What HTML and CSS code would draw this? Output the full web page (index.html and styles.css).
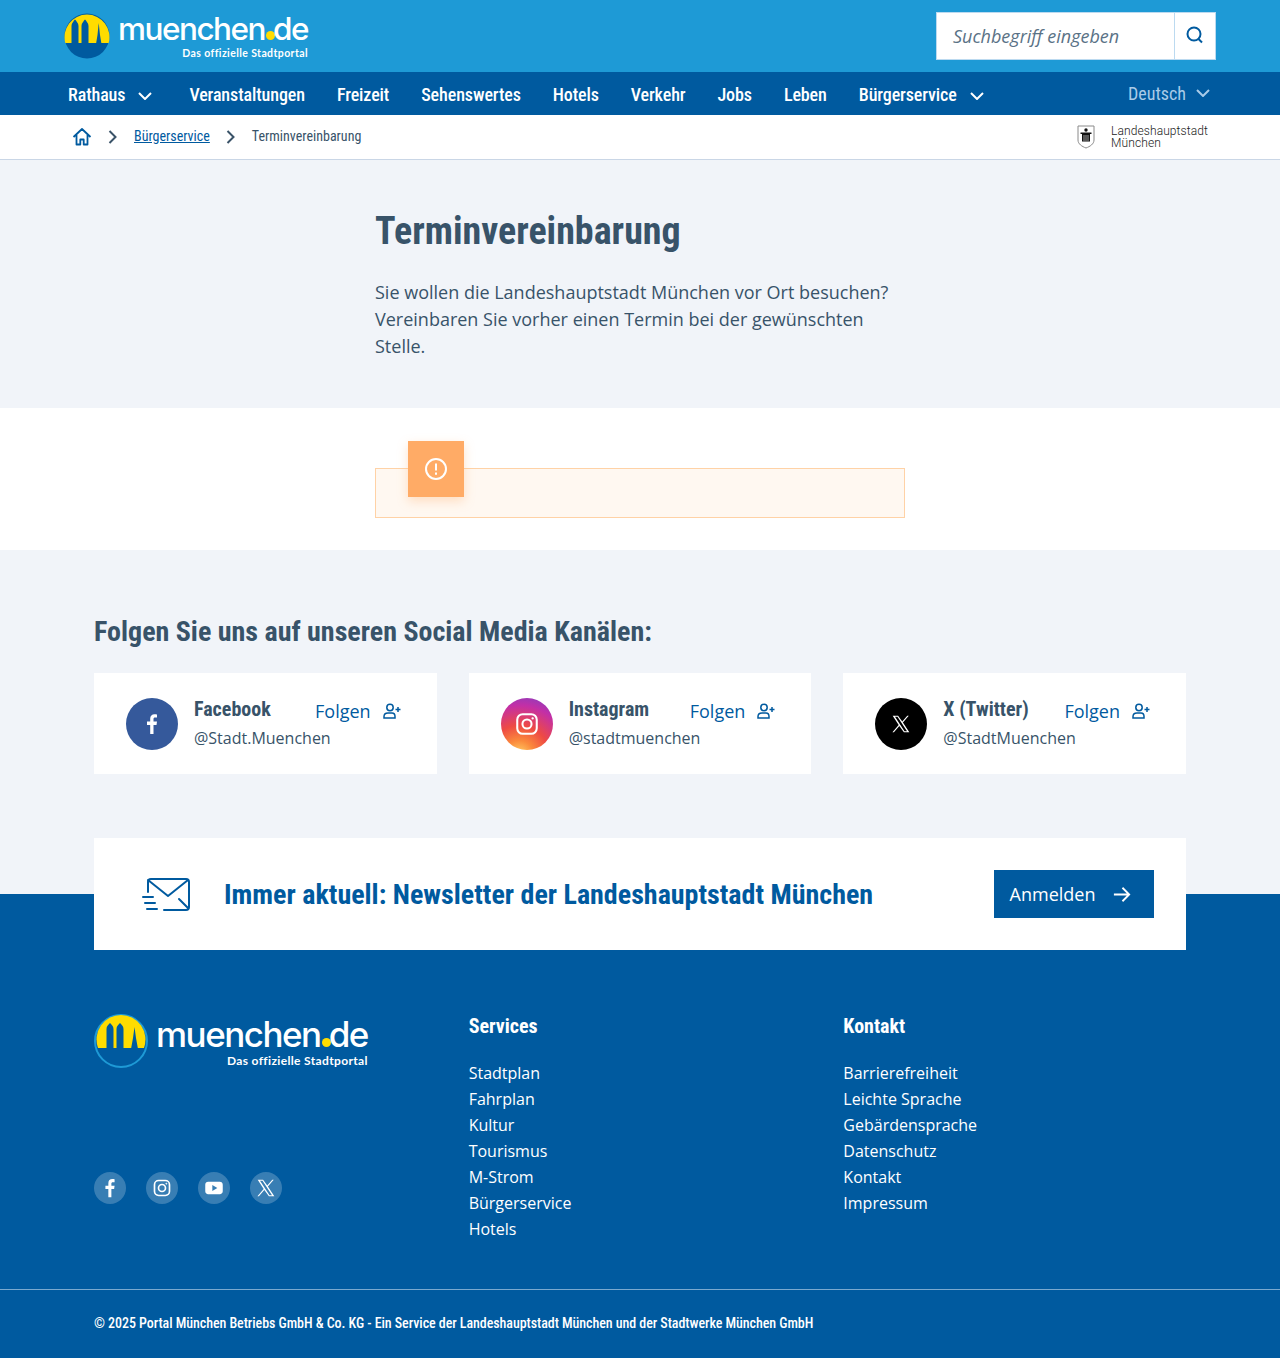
FILE: index.html
```html
<!DOCTYPE html>
<html lang="de">

<head>
  <meta charset="UTF-8">
  <title>Terminvereinbarung</title>
  <link rel="stylesheet" href="styles.css">
</head>

<body>
  <header class="topbar">
    <a class="logo" href="#">
      <svg class="logo-mark" viewBox="0 0 46 46">
        <circle cx="23" cy="23" r="22.500" fill="#005a9f" />
        <path d="M1.300 30A22.500 22.500 0 1 1 44.700 30Z" fill="#ffdc00" />
        <path d="M7.500 31V13C7.500 10 9.500 9 10 7.500L11 6.500 12 7.500C12.500 9 14.500 10 14.500 13V31ZM17.500 31V13C17.500 10 19.500 9 20 7.500L21 6.500 22 7.500C22.500 9 24.500 10 24.500 13V31ZM32 31L33.500 22 34.700 10 36 22 37.500 31Z" fill="#005a9f" />
      </svg>
      <span class="logo-text">
        <span class="logo-name">muenchen<i class="logo-dot"></i>de</span>
        <span class="logo-claim">Das offizielle Stadtportal</span>
      </span>
    </a>
    <form class="search">
      <span class="search-field">Suchbegriff eingeben</span>
      <button class="search-btn" type="button">
        <svg viewBox="0 0 20 20" width="20" height="20" fill="none" stroke="#005a9f" stroke-width="2">
          <circle cx="9" cy="9" r="6.500" />
          <path d="M13.500 14l3.500 3.500" />
        </svg>
      </button>
    </form>
  </header>

  <nav class="mainnav">
    <a class="has-sub" href="#">Rathaus<svg class="chev" viewBox="0 0 14 8"><path d="M1 1l6 6 6-6" /></svg></a>
    <a href="#">Veranstaltungen</a>
    <a href="#">Freizeit</a>
    <a href="#">Sehenswertes</a>
    <a href="#">Hotels</a>
    <a href="#">Verkehr</a>
    <a href="#">Jobs</a>
    <a href="#">Leben</a>
    <a class="has-sub" href="#">Bürgerservice<svg class="chev" viewBox="0 0 14 8"><path d="M1 1l6 6 6-6" /></svg></a>
    <a class="lang" href="#">Deutsch<svg class="chev" viewBox="0 0 14 8"><path d="M1 1l6 6 6-6" /></svg></a>
  </nav>

  <div class="crumbs">
    <a class="crumb-home" href="#">
      <svg viewBox="0 0 20 20" width="20" height="20" fill="none" stroke="#005a9f" stroke-width="1.800" stroke-linejoin="round">
        <path d="M1.500 10L10 2l8.500 8M4.500 8v9.500h3.800v-5h3.400v5h3.800V8" />
      </svg>
    </a>
    <svg class="crumb-sep" viewBox="0 0 9 14"><path d="M1.500 1l6 6-6 6" /></svg>
    <a class="crumb-link" href="#">Bürgerservice</a>
    <svg class="crumb-sep" viewBox="0 0 9 14"><path d="M1.500 1l6 6-6 6" /></svg>
    <span class="crumb-current">Terminvereinbarung</span>
    <div class="lhm">
      <svg viewBox="0 0 18 24" width="18" height="24">
        <path d="M1 1h16V15c0 4-4 6.500-8 8-4-1.500-8-4-8-8z" fill="#fff" stroke="#8a8a8a" />
        <circle cx="9" cy="5" r="1.700" fill="#111" />
        <path d="M3.500 7.500h11v1.500H13v7.500H5V9H3.500z" fill="#111" />
        <path d="M7 10v6M9 10v6M11 10v6" stroke="#fff" stroke-width=".6" />
      </svg>
      <span>Landeshauptstadt<br>München</span>
    </div>
  </div>

  <section class="hero">
    <div class="narrow">
      <h1>Terminvereinbarung</h1>
      <p>Sie wollen die Landeshauptstadt München vor Ort besuchen? Vereinbaren Sie vorher einen Termin bei der gewünschten Stelle.</p>
    </div>
  </section>

  <section class="notice-wrap">
    <div class="notice">
      <span class="notice-icon">
        <svg viewBox="0 0 24 24" width="24" height="24" fill="none" stroke="#fff" stroke-width="2">
          <circle cx="12" cy="12" r="10" />
          <path d="M12 6.500v7M12 15.500v2.200" />
        </svg>
      </span>
    </div>
  </section>

  <section class="social">
    <h2>Folgen Sie uns auf unseren Social Media Kanälen:</h2>
    <div class="cards">
      <div class="card">
        <span class="round fb">
          <svg viewBox="0 0 24 24" width="24" height="24"><path d="M13.500 22v-9h3l.5-3.500h-3.500V7.300c0-1 .3-1.700 1.800-1.700H17V2.400C16.600 2.300 15.600 2.200 14.500 2.200 11.900 2.200 10.200 3.800 10.200 6.700v2.800H7V13h3.200v9z" fill="#fff" /></svg>
        </span>
        <div class="card-body">
          <div class="card-top">
            <strong>Facebook</strong>
            <a class="follow" href="#">Folgen
              <svg viewBox="0 0 18 16" width="18" height="16" fill="none" stroke="#005a9f" stroke-width="1.500"><circle cx="7" cy="4.500" r="3.200" /><path d="M1 15v-1.500C1 11 3 10 5 10h4c2 0 3 1 3 3.500V15zM12.500 6.500h5M15 4v5" /></svg>
            </a>
          </div>
          <span class="handle">@Stadt.Muenchen</span>
        </div>
      </div>
      <div class="card">
        <span class="round ig">
          <svg viewBox="0 0 24 24" width="26" height="26" fill="none" stroke="#fff" stroke-width="1.900"><rect x="3" y="3" width="18" height="18" rx="5" /><circle cx="12" cy="12" r="4.200" /><circle cx="17.200" cy="6.800" r=".6" fill="#fff" stroke-width="1" /></svg>
        </span>
        <div class="card-body">
          <div class="card-top">
            <strong>Instagram</strong>
            <a class="follow" href="#">Folgen
              <svg viewBox="0 0 18 16" width="18" height="16" fill="none" stroke="#005a9f" stroke-width="1.500"><circle cx="7" cy="4.500" r="3.200" /><path d="M1 15v-1.500C1 11 3 10 5 10h4c2 0 3 1 3 3.500V15zM12.500 6.500h5M15 4v5" /></svg>
            </a>
          </div>
          <span class="handle">@stadtmuenchen</span>
        </div>
      </div>
      <div class="card">
        <span class="round xt">
          <svg viewBox="0 0 24 24" width="20" height="20"><path d="M2 2h6.500l5 7 6-7h1.800l-7 8.200L22 22h-6.500l-5.500-7.600L3.500 22H1.700l7.500-8.800zM4.800 3.300l11.400 17.400h3L7.800 3.300z" fill="#fff" /></svg>
        </span>
        <div class="card-body">
          <div class="card-top">
            <strong>X (Twitter)</strong>
            <a class="follow" href="#">Folgen
              <svg viewBox="0 0 18 16" width="18" height="16" fill="none" stroke="#005a9f" stroke-width="1.500"><circle cx="7" cy="4.500" r="3.200" /><path d="M1 15v-1.500C1 11 3 10 5 10h4c2 0 3 1 3 3.500V15zM12.500 6.500h5M15 4v5" /></svg>
            </a>
          </div>
          <span class="handle">@StadtMuenchen</span>
        </div>
      </div>
    </div>
    <div class="newsletter">
      <svg class="mail" viewBox="0 0 48 34" width="48" height="34" fill="none" stroke="#005a9f" stroke-width="2" stroke-linecap="round" stroke-linejoin="round">
        <path d="M6 15V5c0-2 1-3 3-3h35c2 0 3 1 3 3v25c0 2-1 3-3 3H22" />
        <path d="M6 3l20 16L46 3M37 22l9 9" />
        <path d="M1 20h10M3 26h10M5 32h10" />
      </svg>
      <h3>Immer aktuell: Newsletter der Landeshauptstadt München</h3>
      <a class="btn" href="#">Anmelden
        <svg viewBox="0 0 20 18" width="18" height="17" fill="none" stroke="#fff" stroke-width="2"><path d="M1 9h17M10.500 1.500L18 9l-7.500 7.500" /></svg>
      </a>
    </div>
  </section>

  <footer class="footer">
    <div class="footer-grid">
      <div class="footer-left">
        <a class="logo logo-big" href="#">
          <svg class="logo-mark" viewBox="0 0 54 54">
            <circle cx="27" cy="27" r="26" fill="#005a9f" stroke="#1e9ad6" stroke-width="2" />
            <path d="M4 34A24.500 24.500 0 1 1 50 34Z" fill="#ffdc00" />
            <path d="M12.500 35V15C12.500 12 14.500 11 15 10L16 9 17 10C17.500 11 19.500 12 19.500 15V35ZM22.500 35V15C22.500 12 24.500 11 25 10L26 9 27 10C27.500 11 29.500 12 29.500 15V35ZM37 35L39 24 40.500 13 42 24 44 35Z" fill="#005a9f" />
          </svg>
          <span class="logo-text">
            <span class="logo-name">muenchen<i class="logo-dot"></i>de</span>
            <span class="logo-claim">Das offizielle Stadtportal</span>
          </span>
        </a>
        <div class="footer-social">
          <a href="#"><svg viewBox="0 0 24 24" width="22" height="22"><path d="M13.500 22v-9h3l.5-3.500h-3.500V7.300c0-1 .3-1.700 1.800-1.700H17V2.400C16.600 2.300 15.600 2.200 14.500 2.200 11.900 2.200 10.200 3.800 10.200 6.700v2.800H7V13h3.200v9z" fill="#fff" /></svg></a>
          <a href="#"><svg viewBox="0 0 24 24" width="20" height="20" fill="none" stroke="#fff" stroke-width="2"><rect x="3" y="3" width="18" height="18" rx="5" /><circle cx="12" cy="12" r="4.200" /><circle cx="17.200" cy="6.800" r=".6" fill="#fff" stroke-width="1" /></svg></a>
          <a href="#"><svg viewBox="0 0 24 24" width="20" height="20"><path fill-rule="evenodd" d="M5 4.500h14c2 0 3.500 1.500 3.500 3.500v8c0 2-1.500 3.500-3.500 3.500H5c-2 0-3.500-1.500-3.500-3.500V8c0-2 1.500-3.500 3.500-3.500zM10 8.500v7l6-3.500z" fill="#fff" /></svg></a>
          <a href="#"><svg viewBox="0 0 24 24" width="20" height="20"><path d="M2 2h6.500l5 7 6-7h1.800l-7 8.200L22 22h-6.500l-5.500-7.600L3.500 22H1.700l7.500-8.800zM4.800 3.300l11.400 17.400h3L7.800 3.300z" fill="#fff" /></svg></a>
        </div>
      </div>
      <div class="footer-col">
        <h4>Services</h4>
        <a href="#">Stadtplan</a>
        <a href="#">Fahrplan</a>
        <a href="#">Kultur</a>
        <a href="#">Tourismus</a>
        <a href="#">M-Strom</a>
        <a href="#">Bürgerservice</a>
        <a href="#">Hotels</a>
      </div>
      <div class="footer-col">
        <h4>Kontakt</h4>
        <a href="#">Barrierefreiheit</a>
        <a href="#">Leichte Sprache</a>
        <a href="#">Gebärdensprache</a>
        <a href="#">Datenschutz</a>
        <a href="#">Kontakt</a>
        <a href="#">Impressum</a>
      </div>
    </div>
    <div class="copyright">© 2025 Portal München Betriebs GmbH &amp; Co. KG - Ein Service der Landeshauptstadt München und der Stadtwerke München GmbH</div>
  </footer>
</body>

</html>
```

FILE: styles.css
```css
:root {
  --blue: #005a9f;
  --sky: #1e9ad6;
  --pale: #f1f4f9;
  --text: #385369;
}

* {
  box-sizing: border-box;
}

body {
  margin: 0;
  font-family: "Open Sans", sans-serif;
  color: var(--text);
  background: #fff;
}

a {
  color: inherit;
  text-decoration: none;
}

.topbar {
  height: 72px;
  padding: 0 64px;
  display: flex;
  align-items: center;
  justify-content: space-between;
  background: var(--sky);
}

.logo {
  display: flex;
  align-items: center;
  gap: 8px;
  color: #fff;
}

.logo-mark {
  width: 46px;
  height: 46px;
}

.logo-text {
  display: flex;
  flex-direction: column;
  align-items: flex-end;
  padding-top: 2px;
}

.logo-name {
  font-family: "Inter", sans-serif;
  font-size: 31.500px;
  font-weight: 500;
  line-height: 30px;
  letter-spacing: -1.500px;
}

.logo-dot {
  display: inline-block;
  width: 9px;
  height: 9px;
  margin: 0 -2px 0 1px;
  border-radius: 50%;
  background: #ffdc00;
}

.logo-claim {
  margin-top: 2px;
  font-family: "Lato", sans-serif;
  font-size: 10.500px;
  font-weight: 700;
  line-height: 14px;
  letter-spacing: .4px;
}

.search {
  width: 280px;
  height: 48px;
  display: flex;
  background: #fff;
  border: 1px solid #bcdaf0;
}

.search-field {
  flex: 1;
  padding-left: 16px;
  font-size: 18px;
  font-style: italic;
  line-height: 46px;
  color: #5a7286;
}

.search-btn {
  width: 41px;
  padding: 0;
  background: none;
  border: 0;
  border-left: 1px solid #bcdaf0;
}

.mainnav {
  height: 43px;
  padding: 2px 70px 0 68px;
  display: flex;
  align-items: center;
  gap: 32px;
  background: var(--blue);
  font-family: "Roboto", sans-serif;
  font-stretch: 75%;
  font-size: 18px;
  font-weight: 500;
  letter-spacing: -.1px;
  color: #fff;
}

.mainnav a {
  display: flex;
  align-items: center;
}

.chev {
  width: 14px;
  height: 8px;
  margin-left: 13px;
  fill: none;
  stroke: currentColor;
  stroke-width: 2;
}

.has-sub .chev {
  margin-top: 3px;
  margin-right: 5px;
}

.mainnav .lang {
  margin-left: auto;
  padding-bottom: 3px;
  color: #a9cbe8;
  font-weight: 400;
  letter-spacing: 0;
}

.lang .chev {
  margin-left: 10px;
}

.crumbs {
  height: 45px;
  padding: 0 72px;
  display: flex;
  align-items: center;
  background: #fff;
  border-bottom: 1px solid #c9d6e6;
  font-family: "Roboto", sans-serif;
  font-stretch: 75%;
  font-size: 14px;
}

.crumb-home {
  display: flex;
}

.crumb-sep {
  width: 9px;
  height: 14px;
  margin: 0 17px 0 16px;
  fill: none;
  stroke: #3a5368;
  stroke-width: 2;
}

.crumb-link {
  margin-bottom: 2px;
  color: var(--blue);
  text-decoration: underline;
}

.crumb-current {
  margin-bottom: 2px;
}

.lhm {
  margin-left: auto;
  display: flex;
  align-items: center;
  gap: 16px;
  font-family: "Roboto", sans-serif;
  font-stretch: 100%;
  font-size: 12px;
  font-weight: 300;
  letter-spacing: .1px;
  line-height: 12px;
  color: #222;
}

.hero {
  height: 248px;
  padding-top: 48px;
  background: var(--pale);
}

.narrow {
  width: 530px;
  margin: 0 auto;
}

h1 {
  margin: 0 0 25px;
  font-family: "Roboto", sans-serif;
  font-stretch: 75%;
  font-size: 38px;
  font-weight: 700;
  line-height: 46px;
}

.hero p {
  margin: 0;
  font-size: 18px;
  line-height: 27px;
}

.notice-wrap {
  height: 142px;
  padding-top: 60px;
}

.notice {
  position: relative;
  width: 530px;
  height: 50px;
  margin: 0 auto;
  background: #fff8f1;
  border: 1px solid #ffd2a6;
}

.notice-icon {
  position: absolute;
  top: -28px;
  left: 32px;
  width: 56px;
  height: 56px;
  display: flex;
  align-items: center;
  justify-content: center;
  background: #ffab66;
  box-shadow: 0 4px 10px rgba(255, 171, 102, .35);
}

.social {
  padding: 61px 94px 0;
  height: 344px;
  background: var(--pale);
}

h2 {
  margin: 0 0 20px;
  font-family: "Roboto", sans-serif;
  font-stretch: 75%;
  font-size: 28px;
  font-weight: 700;
  line-height: 42px;
}

.cards {
  display: grid;
  grid-template-columns: repeat(3, 1fr);
  gap: 32px;
}

.card {
  height: 101px;
  padding: 25px 36px 25px 32px;
  display: flex;
  gap: 16px;
  background: #fff;
}

.round {
  flex: none;
  width: 52px;
  height: 52px;
  display: flex;
  align-items: center;
  justify-content: center;
  border-radius: 50%;
}

.fb {
  background: #35599b;
}

.ig {
  background: radial-gradient(circle at 35% 110%, #ffd86b 0, #fb8a3c 22%, #ee4a44 45%, #c32fa6 75%, #6a45cc 105%);
}

.xt {
  background: #000;
}

.card-body {
  flex: 1;
}

.card-top {
  display: flex;
  align-items: center;
  justify-content: space-between;
  height: 26px;
  margin-bottom: 2px;
}

.card-top strong {
  margin-bottom: 4px;
  font-family: "Roboto", sans-serif;
  font-stretch: 75%;
  font-size: 20px;
  font-weight: 700;
}

.follow {
  display: flex;
  align-items: center;
  gap: 12px;
  color: var(--blue);
  font-size: 18px;
}

.handle {
  font-size: 16px;
  line-height: 24px;
}

.newsletter {
  position: relative;
  height: 112px;
  margin-top: 64px;
  padding: 0 32px 0 48px;
  display: flex;
  align-items: center;
  background: #fff;
}

.mail {
  flex: none;
}

.newsletter h3 {
  flex: 1;
  margin: 0 0 0 34px;
  font-family: "Roboto", sans-serif;
  font-stretch: 75%;
  font-size: 28px;
  font-weight: 700;
  color: var(--blue);
}

.btn {
  width: 160px;
  height: 48px;
  padding-right: 7px;
  display: flex;
  align-items: center;
  justify-content: center;
  gap: 18px;
  background: var(--blue);
  color: #fff;
  font-size: 18px;
}

.footer {
  padding-top: 120px;
  background: var(--blue);
  color: #fff;
}

.footer-grid {
  height: 275px;
  padding: 0 94px;
  display: grid;
  grid-template-columns: repeat(3, 1fr);
  gap: 32px;
}

.footer-left {
  display: flex;
  flex-direction: column;
}

.logo-big .logo-mark {
  width: 54px;
  height: 54px;
}

.logo-big .logo-name {
  font-size: 35px;
  line-height: 34px;
}

.logo-big .logo-claim {
  margin-top: 3px;
  font-size: 12px;
  letter-spacing: .35px;
}

.footer-social {
  margin-top: 104px;
  display: flex;
  gap: 20px;
}

.footer-social a {
  width: 32px;
  height: 32px;
  display: flex;
  align-items: center;
  justify-content: center;
  border-radius: 50%;
  background: rgba(255, 255, 255, .22);
}

.footer-col {
  display: flex;
  flex-direction: column;
  align-items: flex-start;
  font-size: 16px;
  line-height: 26px;
}

.footer-col h4 {
  margin: 0 0 22px;
  font-family: "Roboto", sans-serif;
  font-stretch: 75%;
  font-size: 20px;
  font-weight: 700;
  line-height: 24px;
}

.copyright {
  height: 69px;
  padding: 0 94px 2px;
  display: flex;
  align-items: center;
  border-top: 1px solid #7aa9cf;
  font-family: "Roboto", sans-serif;
  font-stretch: 75%;
  font-size: 14px;
  font-weight: 500;
  letter-spacing: -.06px;
}
```
